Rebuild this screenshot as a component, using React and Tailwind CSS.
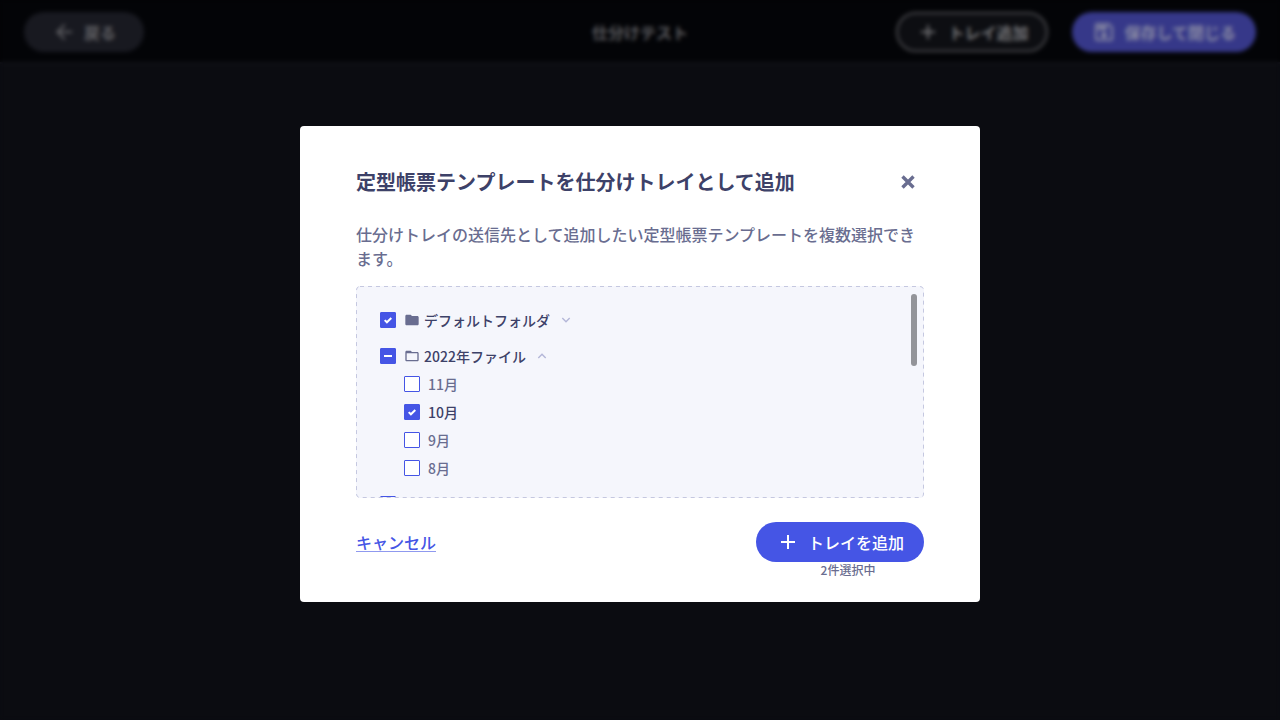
import { useEffect, useRef, useState } from "react";
import { MdAdd, MdArrowBack, MdFolder, MdFolderOpen, MdOutlineSave } from "react-icons/md";

function Chevron({ up }) {
  return (
    <svg viewBox="0 0 16 16" className="size-4 text-[#b4b7d8]" fill="none" stroke="currentColor" strokeWidth="1.4" aria-hidden="true">
      <path d={up ? "M4.3 9.9L8 6.2l3.7 3.7" : "M4.3 6.1L8 9.8l3.7-3.7"} />
    </svg>
  );
}

function Checkbox({ state, ...rest }) {
  const ref = useRef(null);
  const mixed = state === "mixed";
  const checked = state === "checked";
  useEffect(() => {
    ref.current.indeterminate = mixed;
  }, [mixed]);
  return (
    <span className="grid size-4 shrink-0">
      <input
        ref={ref}
        type="checkbox"
        checked={checked}
        className="col-start-1 row-start-1 size-4 appearance-none rounded-[1px] border border-[#4555e5] bg-white checked:bg-[#4555e5] indeterminate:bg-[#4555e5]"
        {...rest}
      />
      {(checked || mixed) && (
        <svg viewBox="0 0 16 16" className="pointer-events-none z-10 col-start-1 row-start-1 size-4" fill="none" stroke="white" strokeWidth="2" aria-hidden="true">
          <path d={mixed ? "M4 8h8" : "M4.7 8.1l2.2 2.2 4.4-4.3"} />
        </svg>
      )}
    </span>
  );
}

function Folder({ id, name, state, open, onToggle, onCheck, children }) {
  const Icon = open ? MdFolderOpen : MdFolder;
  return (
    <li>
      <div className="flex h-4 items-center text-sm leading-4 font-medium text-[#3d4168]">
        <Checkbox id={id} state={state} onChange={onCheck} />
        <label htmlFor={id} className="ml-2 flex items-center gap-1">
          <Icon className="size-4 text-[#696d90]" aria-hidden="true" />
          {name}
        </label>
        <button type="button" onClick={onToggle} aria-expanded={open} aria-label={name} className="ml-2">
          <Chevron up={open} />
        </button>
      </div>
      {children}
    </li>
  );
}

export default function App() {
  const [first, setFirst] = useState(true);
  const [last, setLast] = useState(false);
  const [open, setOpen] = useState(true);
  const [months, setMonths] = useState([
    { name: "11月", on: false },
    { name: "10月", on: true },
    { name: "9月", on: false },
    { name: "8月", on: false },
  ]);
  const picked = months.filter((m) => m.on).length;
  const yearState = picked === 0 ? "none" : picked === months.length ? "checked" : "mixed";
  const count = picked + (first ? 1 : 0) + (last ? 1 : 0);

  return (
    <div className="min-h-screen bg-[#0b0c11] font-['Noto_Sans_CJK_JP',sans-serif] font-medium">
      <header className="grid h-16 grid-cols-[1fr_auto_1fr] items-center border-b-2 border-[#111218] bg-[#030407] px-6 pt-0.5 text-base leading-6 text-[#606064]">
        <button type="button" className="flex h-10 items-center gap-2 justify-self-start rounded-full bg-[#181920] px-7 font-bold">
          <MdArrowBack className="size-6" aria-hidden="true" />
          戻る
        </button>
        <h1 className="font-bold">仕分けテスト</h1>
        <div className="flex gap-6 justify-self-end font-bold">
          <button type="button" className="flex h-10 items-center gap-2 rounded-full border-2 border-[#48484c] bg-[#0d0e12] px-4.5 text-[#77777a]">
            <MdAdd className="size-6" aria-hidden="true" />
            トレイ追加
          </button>
          <button type="button" className="flex h-10 items-center gap-2 rounded-full bg-[#363889] px-5 text-[#8a8ba4]">
            <MdOutlineSave className="size-6" aria-hidden="true" />
            保存して閉じる
          </button>
        </div>
      </header>

      <div className="fixed inset-0 flex items-center justify-center pt-2 backdrop-blur-[2px]">
        <section role="dialog" aria-modal="true" aria-labelledby="dialog-title" className="w-full max-w-[680px] rounded bg-white px-14 pt-10 pb-6">
          <div className="flex h-8 items-center justify-between">
            <h2 id="dialog-title" className="text-xl leading-8 font-bold text-[#3d4168]">
              定型帳票テンプレートを仕分けトレイとして追加
            </h2>
            <button type="button" aria-label="閉じる" className="flex size-8 items-center justify-center text-[#696d90]">
              <svg viewBox="0 0 16 16" className="size-4" fill="none" stroke="currentColor" strokeWidth="3.4" aria-hidden="true">
                <path d="M2.5 2.5l11 11M13.5 2.5l-11 11" />
              </svg>
            </button>
          </div>
          <p className="mt-6 text-base leading-6 text-[#696d90]">
            仕分けトレイの送信先として追加したい定型帳票テンプレートを複数選択できます。
          </p>

          <div className="relative mt-4 rounded bg-[#f5f6fc] p-px">
            <svg className="pointer-events-none absolute inset-0 size-full" fill="none" aria-hidden="true">
              <rect x="0.5" y="0.5" rx="3.5" className="h-[calc(100%-1px)] w-[calc(100%-1px)]" stroke="#c5c8e0" strokeDasharray="4 4" />
            </svg>
            <ul className="flex h-[210px] flex-col gap-5 overflow-y-auto px-[23px] pt-[25px] [scrollbar-width:none]">
              <Folder id="folder-default" name="デフォルトフォルダ" state={first ? "checked" : "none"} open={false} onCheck={() => setFirst(!first)} />
              <Folder
                id="folder-2022"
                name="2022年ファイル"
                state={yearState}
                open={open}
                onToggle={() => setOpen(!open)}
                onCheck={() => setMonths(months.map((m) => ({ ...m, on: yearState !== "checked" })))}
              >
                {open && (
                  <ul className="mt-3 flex flex-col gap-3 pl-6">
                    {months.map((m, i) => (
                      <li key={m.name} className="flex h-4 items-center gap-2 text-sm leading-4">
                        <Checkbox
                          id={`month-${i}`}
                          state={m.on ? "checked" : "none"}
                          onChange={() => setMonths(months.map((x, j) => (j === i ? { ...x, on: !x.on } : x)))}
                        />
                        <label htmlFor={`month-${i}`} className={m.on ? "text-[#3d4168]" : "text-[#696d90]"}>
                          {m.name}
                        </label>
                      </li>
                    ))}
                  </ul>
                )}
              </Folder>
              <li className="flex gap-2 pb-6">
                <Checkbox aria-label="フォルダ" state={last ? "checked" : "none"} onChange={() => setLast(!last)} />
                <MdFolder className="size-4 text-[#696d90]" aria-hidden="true" />
              </li>
            </ul>
            <div className="absolute top-2 right-[7px] h-18 w-1.5 rounded-full bg-[#939499]" aria-hidden="true" />
          </div>

          <div className="mt-6 flex items-start justify-between">
            <div className="flex h-10 items-center">
              <button type="button" className="border-b border-[#8f99ef] text-base leading-[18px] text-[#4555e5]">
                キャンセル
              </button>
            </div>
            <div>
              <button type="button" className="flex h-10 items-center gap-2 rounded-full bg-[#4555e5] px-5 text-base leading-6 text-white">
                <MdAdd className="size-6" aria-hidden="true" />
                トレイを追加
              </button>
              <p className="pl-4 text-center text-xs leading-4 text-[#696d90]">{count}件選択中</p>
            </div>
          </div>
        </section>
      </div>
    </div>
  );
}
